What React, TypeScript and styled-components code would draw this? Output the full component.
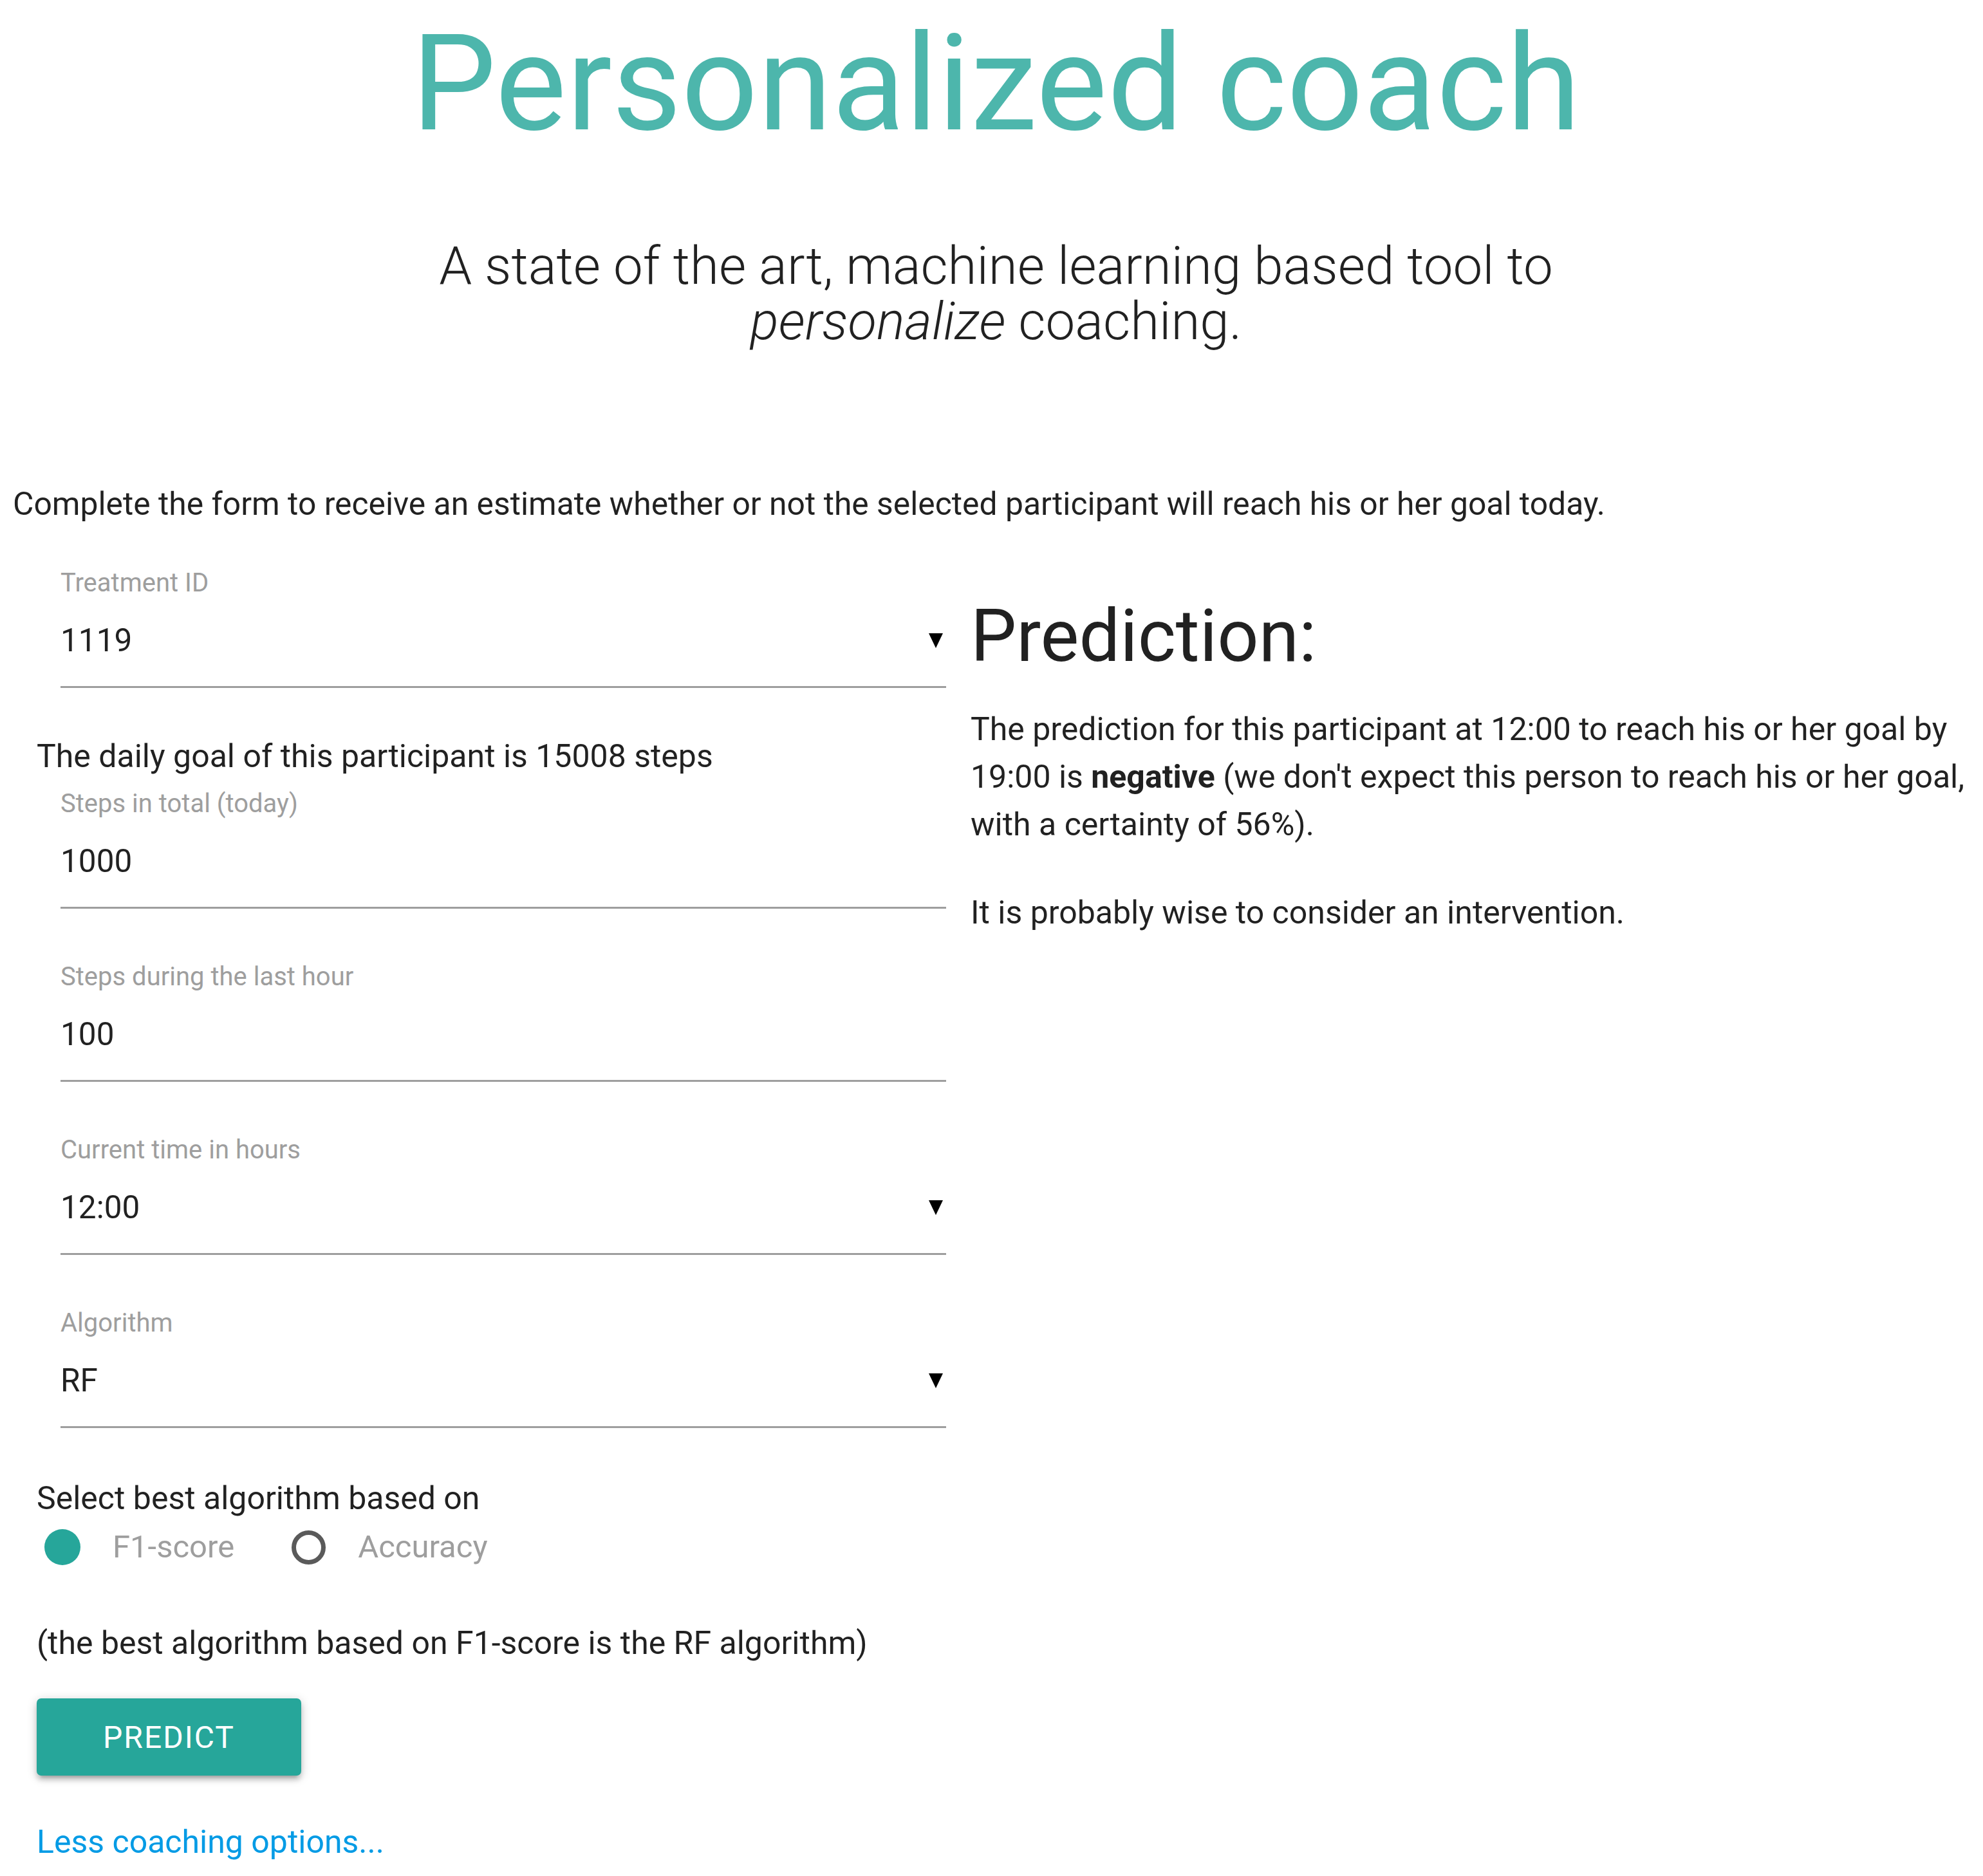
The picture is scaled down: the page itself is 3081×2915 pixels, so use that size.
import React from "react"
import styled, { createGlobalStyle } from "styled-components"

const GlobalStyle = createGlobalStyle`
  html, body {
    margin: 0;
    padding: 0;
    background: #ffffff;
  }
  body {
    font-family: Roboto, "Noto Sans", "Liberation Sans", sans-serif;
    color: rgba(0, 0, 0, 0.87);
  }
  * {
    box-sizing: border-box;
  }
`

interface FieldProps {
  label: string
  value: string
  select?: boolean
  after?: number
}

const Field = (props: FieldProps) => {
  const { label, value, select, after } = props

  return (
    <FieldWrapper $after={after ?? 84}>
      <FieldLabel>{label}</FieldLabel>
      <ValueRow>
        <FieldValue>{value}</FieldValue>
        {select && (
          <Caret viewBox="0 0 22 24" aria-hidden="true">
            <polygon points="0,1 22,1 11,24" />
          </Caret>
        )}
      </ValueRow>
    </FieldWrapper>
  )
}

const App = () => {
  return (
    <>
      <GlobalStyle />
      <Page>
        <Title>Personalized coach</Title>
        <Subtitle>
          A state of the art, machine learning based tool to <em>personalize</em> coaching.
        </Subtitle>

        <Intro>
          Complete the form to receive an estimate whether or not the selected participant will
          reach his or her goal today.
        </Intro>

        <Columns>
          <FormColumn>
            <Field label="Treatment ID" value="1119" select after={70} />
            <GoalText>The daily goal of this participant is 15008 steps</GoalText>
            <Field label="Steps in total (today)" value="1000" />
            <Field label="Steps during the last hour" value="100" />
            <Field label="Current time in hours" value="12:00" select />
            <Field label="Algorithm" value="RF" select after={73} />

            <BodyText>Select best algorithm based on</BodyText>
            <RadioGroup>
              <RadioOption>
                <RadioDot $checked />
                <RadioLabel>F1-score</RadioLabel>
              </RadioOption>
              <RadioOption>
                <RadioDot />
                <RadioLabel>Accuracy</RadioLabel>
              </RadioOption>
            </RadioGroup>

            <BestNote>(the best algorithm based on F1-score is the RF algorithm)</BestNote>

            <PredictButton type="button">Predict</PredictButton>

            <OptionsLink href="#">Less coaching options...</OptionsLink>
          </FormColumn>

          <ResultColumn>
            <ResultTitle>Prediction:</ResultTitle>
            <ResultText>
              The prediction for this participant at 12:00 to reach his or her goal by
              <br />
              19:00 is <strong>negative</strong> (we don't expect this person to reach his or her
              goal,
              <br />
              with a certainty of 56%).
            </ResultText>
            <ResultAdvice>It is probably wise to consider an intervention.</ResultAdvice>
          </ResultColumn>
        </Columns>
      </Page>
    </>
  )
}

export default App

const Page = styled.div`
  padding: 0 6px 0 20px;
  width: 3081px;
`

const Title = styled.h1`
  margin: 10px 0 0;
  font-size: 208.7px;
  line-height: 240px;
  font-weight: 400;
  color: #4db6ac;
  text-align: center;
`

const Subtitle = styled.h2`
  margin: 120px auto 0;
  width: 1850px;
  font-size: 81.7px;
  line-height: 86px;
  font-weight: 300;
  color: rgba(0, 0, 0, 0.87);
  text-align: center;

  em {
    font-style: italic;
  }
`

const Intro = styled.p`
  margin: 205px 0 0;
  font-size: 49.8px;
  line-height: 72px;
`

const Columns = styled.div`
  display: grid;
  grid-template-columns: 1451px 1fr;
  margin-top: 65px;
  padding-left: 37px;
`

const FormColumn = styled.div`
  display: flex;
  flex-direction: column;
  align-items: flex-start;
`

const FieldWrapper = styled.div<{ $after: number }>`
  margin: 0 0 ${(p) => p.$after}px 37px;
  width: 1376px;
`

const FieldLabel = styled.div`
  font-size: 40px;
  line-height: 44px;
  color: #9e9e9e;
  margin-bottom: 37px;
`

const ValueRow = styled.div`
  display: flex;
  align-items: center;
  justify-content: space-between;
  box-sizing: content-box;
  height: 60px;
  padding: 0 5px 41px 0;
  border-bottom: 3px solid #9e9e9e;
`

const FieldValue = styled.span`
  font-size: 49.5px;
  line-height: 60px;
  color: rgba(0, 0, 0, 0.87);
`

const Caret = styled.svg`
  width: 22px;
  height: 24px;
  fill: #000000;
`

const BodyText = styled.p`
  margin: 0;
  font-size: 50px;
  line-height: 72px;
`

const GoalText = styled(BodyText)`
  margin-bottom: 16px;
`

const RadioGroup = styled.div`
  display: flex;
  align-items: center;
  gap: 89px;
  height: 60px;
  margin: 10px 0 0 12px;
`

const RadioOption = styled.label`
  display: flex;
  align-items: center;
  gap: 50px;
`

const RadioDot = styled.span<{ $checked?: boolean }>`
  width: ${(p) => (p.$checked ? 56 : 53)}px;
  height: ${(p) => (p.$checked ? 56 : 53)}px;
  border-radius: 50%;
  background: ${(p) => (p.$checked ? "#26a69a" : "transparent")};
  border: ${(p) => (p.$checked ? "none" : "7px solid #5a5a5a")};
`

const RadioLabel = styled.span`
  font-size: 49px;
  line-height: 60px;
  color: #9e9e9e;
`

const BestNote = styled(BodyText)`
  margin-top: 83px;
`

const PredictButton = styled.button`
  margin-top: 50px;
  width: 411px;
  height: 120px;
  border: none;
  border-radius: 7px;
  background: #26a69a;
  color: #ffffff;
  font-family: Roboto, "Noto Sans", sans-serif;
  font-size: 48px;
  letter-spacing: 2px;
  text-transform: uppercase;
  cursor: pointer;
  box-shadow: 0 7px 7px 0 rgba(0, 0, 0, 0.14), 0 10px 3px -7px rgba(0, 0, 0, 0.12),
    0 3px 16px 0 rgba(0, 0, 0, 0.2);
`

const OptionsLink = styled.a`
  margin-top: 67px;
  font-size: 50px;
  line-height: 72px;
  color: #039be5;
  text-decoration: none;
`

const ResultColumn = styled.div`
  display: flex;
  flex-direction: column;
`

const ResultTitle = styled.h3`
  margin: 35px 0 0;
  font-size: 113px;
  line-height: 139px;
  font-weight: 400;
`

const ResultText = styled.p`
  margin: 38px 0 0;
  font-size: 50px;
  line-height: 74px;
  white-space: nowrap;

  strong {
    font-weight: 700;
  }
`

const ResultAdvice = styled(ResultText)`
  margin-top: 63px;
`
